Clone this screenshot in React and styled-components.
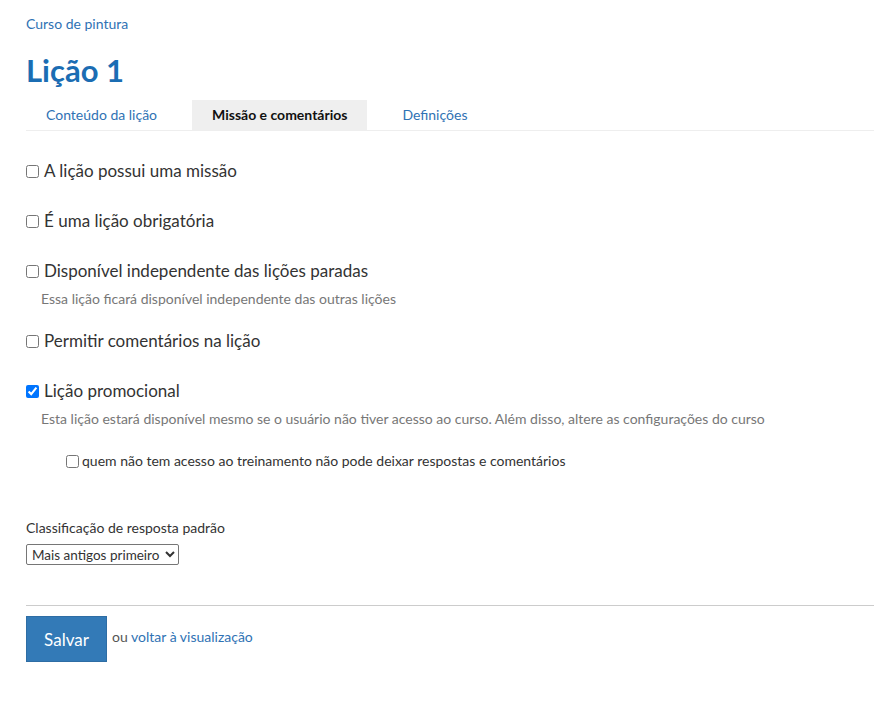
import React, { useState } from 'react'
import { styled, createGlobalStyle } from 'styled-components'

const GlobalStyle = createGlobalStyle`
  body {
    margin: 0;
    background: #fff;
    font-family: Lato, "Open Sans", Arial, sans-serif;
    color: #333;
  }
`

const Page = styled.div`
  padding: 14px 0 40px 26px;
`

const Breadcrumb = styled.a`
  display: block;
  font-size: 14px;
  line-height: 20px;
  color: #2f72b4;
  text-decoration: none;
`

const Title = styled.h1`
  margin: 16px 0 10px;
  font-size: 31px;
  line-height: 40px;
  font-weight: 700;
  color: #1b6db3;
`

const Tabs = styled.div`
  display: flex;
  gap: 15px;
  border-bottom: 1px solid #eee;
  margin-bottom: 28px;
`

const Tab = styled.a`
  display: block;
  padding: 0 20px;
  height: 30px;
  line-height: 30px;
  font-size: 14px;
  text-decoration: none;
  color: ${p => (p.$active ? '#111' : '#2f72b4')};
  font-weight: ${p => (p.$active ? 700 : 400)};
  background: ${p => (p.$active ? '#efefef' : 'transparent')};
`

const Field = styled.div`
  margin-bottom: ${p => p.$gap || '26px'};
`

const CheckLabel = styled.label`
  display: flex;
  align-items: center;
  font-size: 17px;
  line-height: 24px;
  color: #333;
  cursor: pointer;

  input {
    margin: 0 5px 0 0;
    width: 13px;
    height: 13px;
  }
`

const Help = styled.p`
  margin: 6px 0 0 15px;
  font-size: 14px;
  line-height: 20px;
  color: #777;
`

const SubCheck = styled.label`
  display: flex;
  align-items: center;
  margin: 22px 0 0 40px;
  font-size: 14px;
  line-height: 20px;
  color: #333;

  input {
    margin: 0 3px 0 0;
    width: 13px;
    height: 13px;
  }
`

const SortLabel = styled.div`
  margin-top: 47px;
  font-size: 14px;
  line-height: 20px;
  color: #333;
`

const Select = styled.select`
  display: block;
  margin-top: 6px;
  width: 153px;
  height: 21px;
  padding: 0 1px;
  font-family: inherit;
  font-size: 13.5px;
  color: #333;
  border: 1px solid #767676;
  border-radius: 2px;
  background: #fff;
`

const Divider = styled.hr`
  margin: 40px 0 10px;
  border: 0;
  border-top: 1px solid #ccc;
`

const Actions = styled.div`
  display: flex;
  align-items: center;
`

const SaveButton = styled.button`
  width: 81px;
  height: 46px;
  background: #337ab7;
  border: 1px solid #2e6da4;
  color: #fff;
  font-family: inherit;
  font-size: 17px;
  cursor: pointer;
  margin-right: 5px;
`

const Aside = styled.span`
  margin-bottom: 5px;
  font-size: 14px;
  color: #555;

  a {
    color: #2f72b4;
    text-decoration: none;
  }
`

const options = [
  { label: 'A lição possui uma missão' },
  { label: 'É uma lição obrigatória' },
  { label: 'Disponível independente das lições paradas', help: 'Essa lição ficará disponível independente das outras lições' },
  { label: 'Permitir comentários na lição' },
]

const App = () => {
  const [promo, setPromo] = useState(true)

  return (
    <Page>
      <GlobalStyle />
      <Breadcrumb href="#">Curso de pintura</Breadcrumb>
      <Title>Lição 1</Title>
      <Tabs>
        <Tab href="#">Conteúdo da lição</Tab>
        <Tab href="#" $active>Missão e comentários</Tab>
        <Tab href="#">Definições</Tab>
      </Tabs>

      {options.map(o => (
        <Field key={o.label} $gap={o.help ? '20px' : '26px'}>
          <CheckLabel>
            <input type="checkbox" />
            {o.label}
          </CheckLabel>
          {o.help && <Help>{o.help}</Help>}
        </Field>
      ))}

      <Field $gap="0">
        <CheckLabel>
          <input type="checkbox" checked={promo} onChange={() => setPromo(v => !v)} />
          Lição promocional
        </CheckLabel>
        <Help>Esta lição estará disponível mesmo se o usuário não tiver acesso ao curso. Além disso, altere as configurações do curso</Help>
        <SubCheck>
          <input type="checkbox" />
          quem não tem acesso ao treinamento não pode deixar respostas e comentários
        </SubCheck>
      </Field>

      <SortLabel>Classificação de resposta padrão</SortLabel>
      <Select defaultValue="old">
        <option value="old">Mais antigos primeiro</option>
        <option value="new">Mais recentes primeiro</option>
      </Select>

      <Divider />
      <Actions>
        <SaveButton>Salvar</SaveButton>
        <Aside>ou <a href="#">voltar à visualização</a></Aside>
      </Actions>
    </Page>
  )
}

export default App
